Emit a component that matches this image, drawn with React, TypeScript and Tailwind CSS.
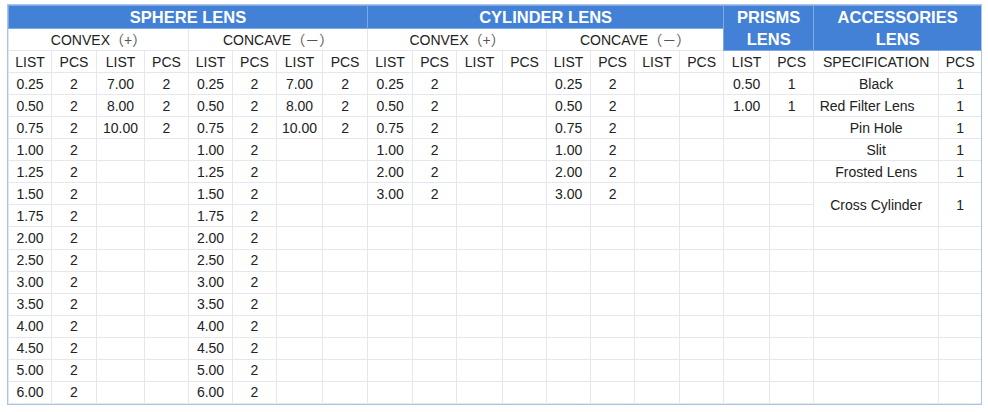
import React from "react";

const widths = [
  "w-[43px]", "w-[45px]", "w-[48px]", "w-[44px]", "w-[44px]", "w-[44px]", "w-[46px]", "w-[45px]",
  "w-[45px]", "w-[44px]", "w-[46px]", "w-[44px]", "w-[44px]", "w-[44px]", "w-[45px]", "w-[44px]",
  "w-[46px]", "w-[44px]", "w-[125px]", "w-[43px]",
];

const sphere = ["0.25", "0.50", "0.75", "1.00", "1.25", "1.50", "1.75", "2.00", "2.50", "3.00", "3.50", "4.00", "4.50", "5.00", "6.00"];
const sphereHigh = ["7.00", "8.00", "10.00"];
const cylinder = ["0.25", "0.50", "0.75", "1.00", "2.00", "3.00"];
const prisms = ["0.50", "1.00"];
const accessories = ["Black", "Red Filter Lens", "Pin Hole", "Slit", "Frosted Lens", "Cross Cylinder"];

const td = "border border-[#e6e7ec] text-center align-middle p-0";
const head = "bg-[#4381d6] text-white font-bold text-[16.5px] leading-[22px] border border-[#7fa9e4] text-center align-middle p-0";

function Cell({ value }: { value?: string }) {
  return <td className={td}>{value ?? ""}</td>;
}

export default function App() {
  const rows = sphere.map((s, i) => {
    const hi = sphereHigh[i];
    const cy = cylinder[i];
    const pr = prisms[i];
    return (
      <tr key={i} className="h-[22px]">
        <Cell value={s} />
        <Cell value="2" />
        <Cell value={hi} />
        <Cell value={hi ? "2" : undefined} />
        <Cell value={s} />
        <Cell value="2" />
        <Cell value={hi} />
        <Cell value={hi ? "2" : undefined} />
        <Cell value={cy} />
        <Cell value={cy ? "2" : undefined} />
        <Cell />
        <Cell />
        <Cell value={cy} />
        <Cell value={cy ? "2" : undefined} />
        <Cell />
        <Cell />
        <Cell value={pr} />
        <Cell value={pr ? "1" : undefined} />
        {i < 5 && (
          <>
            <td className={td + (i === 1 ? " pr-[18px]" : "")}>{accessories[i]}</td>
            <Cell value="1" />
          </>
        )}
        {i === 5 && (
          <>
            <td rowSpan={2} className={td}>{accessories[5]}</td>
            <td rowSpan={2} className={td}>1</td>
          </>
        )}
        {i > 6 && (
          <>
            <Cell />
            <Cell />
          </>
        )}
      </tr>
    );
  });

  return (
    <div className="bg-white w-[988px] h-[412px] pt-[5px] pl-[8px] font-['Liberation_Sans','Noto_Sans_CJK_SC',sans-serif] text-[14px] text-[#222]">
      <div className="w-[973px] h-[399px] outline outline-1 outline-[#a9c4e8]">
        <table className="table-fixed border-collapse w-[973px] h-[399px] leading-[20px]">
          <colgroup>
            {widths.map((w, i) => (
              <col key={i} className={w} />
            ))}
          </colgroup>
          <tbody>
            <tr className="h-[23px]">
              <td colSpan={8} className={head}>SPHERE LENS</td>
              <td colSpan={8} className={head}>CYLINDER LENS</td>
              <td colSpan={2} rowSpan={2} className={head}>PRISMS<br />LENS</td>
              <td colSpan={2} rowSpan={2} className={head}>ACCESSORIES<br />LENS</td>
            </tr>
            <tr className="h-[22px]">
              <td colSpan={4} className={td}>CONVEX<span className="text-[#555]">（+）</span></td>
              <td colSpan={4} className={td}>CONCAVE<span className="text-[#555]">（－）</span></td>
              <td colSpan={4} className={td}>CONVEX<span className="text-[#555]">（+）</span></td>
              <td colSpan={4} className={td}>CONCAVE<span className="text-[#555]">（－）</span></td>
            </tr>
            <tr className="h-[22px]">
              {Array.from({ length: 18 }).map((_, i) => (
                <td key={i} className={td}>{i % 2 === 0 ? "LIST" : "PCS"}</td>
              ))}
              <td className={td}>SPECIFICATION</td>
              <td className={td}>PCS</td>
            </tr>
            {rows}
          </tbody>
        </table>
      </div>
    </div>
  );
}
